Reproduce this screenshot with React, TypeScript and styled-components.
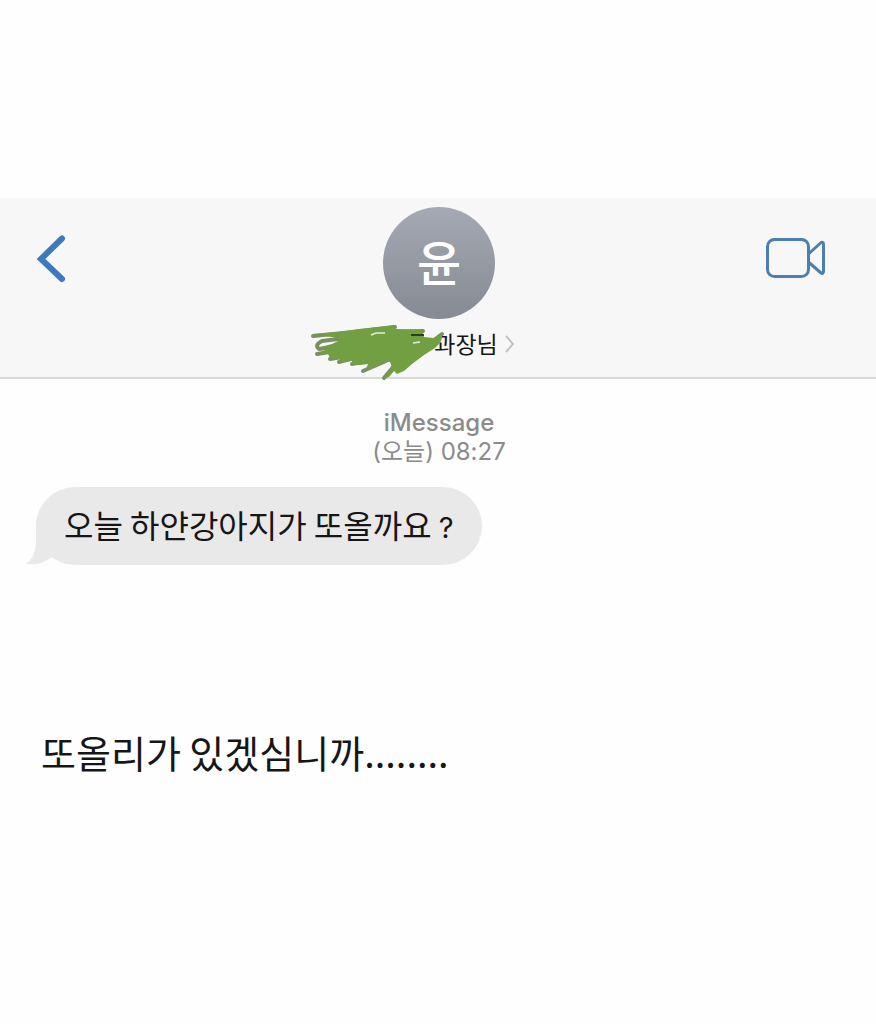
import styled, { createGlobalStyle } from "styled-components";

const colors = {
    blue: "#3f78bd",
    videoBlue: "#4a7fb0",
    bar: "#f7f7f8",
    line: "#d9d9db",
    bubble: "#e9e9ea",
    text: "#161616",
    muted: "#8b8b8c",
    marker: "#729f42",
    markerEdge: "#7b8f63",
};

export default function App() {
    return (
        <>
            <GlobalStyle />
            <Page>
                <Header>
                    <IconButton type="button" aria-label="뒤로">
                        <svg width="30" height="50" viewBox="0 0 30 50" fill="none">
                            <path d="M26 4.500 L5 25 L26 45" stroke={colors.blue} strokeWidth="6" strokeLinecap="round" />
                        </svg>
                    </IconButton>
                    <Avatar>윤</Avatar>
                    <IconButton type="button" aria-label="영상 통화" $end>
                        <svg width="76" height="42" viewBox="0 0 76 42" fill="none" stroke={colors.videoBlue} strokeWidth="3" strokeLinejoin="round">
                            <rect x="1.500" y="1.500" width="41" height="37" rx="7" />
                            <path d="M43 15.500 L54.500 5 Q57.500 3 57.500 6.500 V33 Q57.500 37 54.500 34.500 L43 24.500" />
                        </svg>
                    </IconButton>
                    <Contact type="button">
                        <HiddenName>
                            <Scribble width="144" height="64" viewBox="0 0 144 64" aria-hidden="true">
                                <g fill="none" stroke={colors.markerEdge} strokeWidth="4" strokeLinecap="round" strokeLinejoin="round">
                                    <path d="M7 16 L48 12 L89 7 L72 12 L117 11 L90 16" />
                                    <path d="M40 18 L16 21 Q8 25 13 29 L30 27" />
                                    <path d="M11 34 L30 31 M24 39 L42 36 M33 42 L48 38 M46 44 L62 41 M57 51 L80 41 M78 58 L88 46 M128 20 L136 14" />
                                </g>
                                <path
                                    fill={colors.marker}
                                    d="M7 14 L32 12 L53 9 L89 5 L90 9 L116 10 L118 17 L128 18 L136 13 L136 18 L134 23 L129 28 L118 35 L106 44 L98 51 L91 54 L88 51 L83 57 L79 58 L86 47 L84 42 L77 42 L68 47 L60 49 L62 44 L54 45 L46 44 L46 41 L35 42 L34 39 L24 38 L22 34 L12 34 L21 29 L14 27 L26 24 L36 19 L26 17 Z"
                                />
                                <path d="M65 15 L70 13 L79 13 M107 23 L114 22" stroke="#e4ebdc" strokeWidth="1.500" fill="none" />
                                <path d="M105 15 L118 15" stroke="#2f3d20" strokeWidth="2" />
                            </Scribble>
                        </HiddenName>
                        <span>과장님</span>
                        <Disclosure width="12" height="22" viewBox="0 0 12 22" fill="none">
                            <path d="M2 4 L9 12 L2 20" stroke="#c2c2c5" strokeWidth="2" />
                        </Disclosure>
                    </Contact>
                </Header>
                <Thread>
                    <Stamp>
                        <strong>iMessage</strong>
                        <time>(오늘) 08:27</time>
                    </Stamp>
                    <Bubble>
                        <Tail width="40" height="44" viewBox="0 0 40 44" aria-hidden="true">
                            <path d="M10 0 V20 Q10 36 0 43 Q14 45 26 36 L40 43 V0 Z" fill={colors.bubble} />
                        </Tail>
                        <BubbleText>
                            오늘 하얀강아지가 또올까요 <Latin>?</Latin>
                        </BubbleText>
                    </Bubble>
                    <Caption>또올리가 있겠심니까........</Caption>
                </Thread>
            </Page>
        </>
    );
}

const GlobalStyle = createGlobalStyle`
    * {
        box-sizing: border-box;
    }
    body {
        margin: 0;
        background: #fefefe;
        color: ${colors.text};
        font-family: "Noto Sans CJK KR", "Noto Sans", sans-serif;
    }
`;

const Page = styled.main`
    padding-top: 198px;
`;

const Header = styled.header`
    display: grid;
    grid-template-columns: 1fr auto 1fr;
    align-items: center;
    padding: 9px 34px 17px 36px;
    background: ${colors.bar};
    border-bottom: 2px solid ${colors.line};
`;

const IconButton = styled.button<{ $end?: boolean }>`
    display: flex;
    justify-self: ${props => (props.$end ? "end" : "start")};
    margin-bottom: 8px;
    padding: 0;
    border: 0;
    background: none;
`;

const Avatar = styled.div`
    display: flex;
    align-items: center;
    justify-content: center;
    width: 112px;
    height: 112px;
    padding-bottom: 6px;
    border-radius: 50%;
    background: linear-gradient(#a4a9b3, #868a93);
    color: #fff;
    font-size: 48px;
    font-weight: 500;
    line-height: 56px;
`;

const Contact = styled.button`
    grid-column: 1 / -1;
    justify-self: center;
    display: flex;
    align-items: center;
    margin-top: 7px;
    padding: 0;
    border: 0;
    background: none;
    color: ${colors.text};
    font-family: inherit;
    font-size: 23px;
    line-height: 34px;
`;

const HiddenName = styled.span`
    position: relative;
    width: 72px;
    height: 34px;
`;

const Scribble = styled.svg`
    position: absolute;
    top: -6px;
    right: -16px;
`;

const Disclosure = styled.svg`
    margin-left: 6px;
`;

const Thread = styled.section`
    display: flex;
    flex-direction: column;
    align-items: flex-start;
    padding: 29px 34px 29px 36px;
`;

const Stamp = styled.div`
    display: flex;
    flex-direction: column;
    align-self: center;
    align-items: center;
    color: ${colors.muted};
    font-family: Inter, "Noto Sans CJK KR", sans-serif;
    font-size: 24px;
    line-height: 29px;

    strong {
        font-weight: 500;
    }
`;

const Bubble = styled.div`
    position: relative;
    margin-top: 21px;
    padding: 13px 28px 17px;
    border-radius: 39px;
    background: ${colors.bubble};
`;

const BubbleText = styled.p`
    position: relative;
    margin: 0;
    font-size: 32px;
    line-height: 48px;
`;

const Latin = styled.span`
    font-family: Inter, sans-serif;
    font-size: 29px;
    line-height: 1;
`;

const Tail = styled.svg`
    position: absolute;
    left: -10px;
    bottom: 0;
`;

const Caption = styled.p`
    margin: 159px 5px 0;
    font-size: 38px;
    line-height: 56px;
`;
